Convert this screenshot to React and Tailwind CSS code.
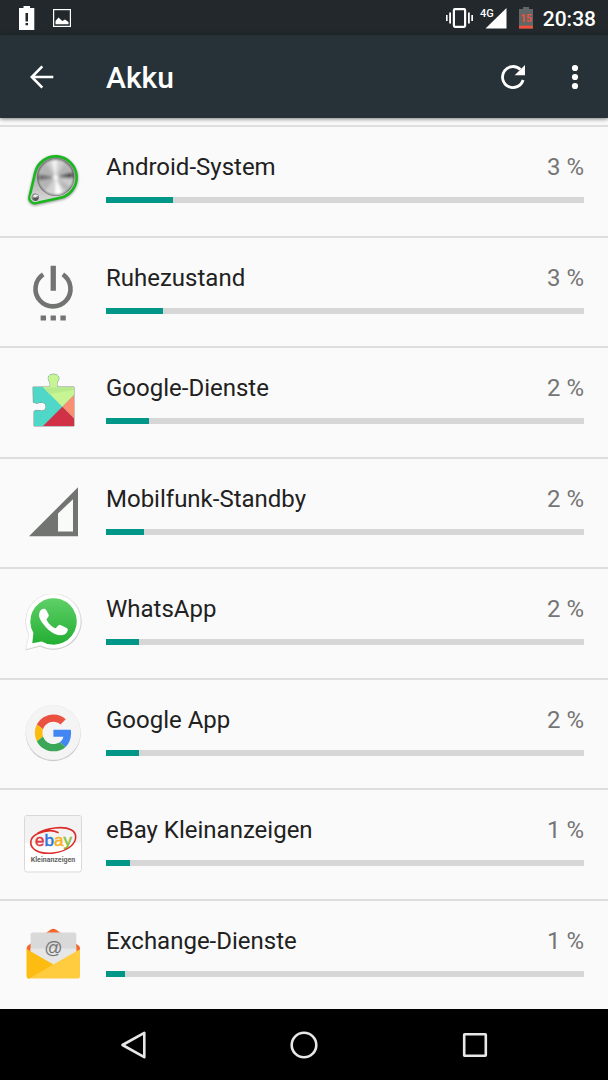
function AndroidSystemIcon() {
  return (
    <svg viewBox="0 0 58 58" className="size-full" aria-hidden="true">
      <defs>
        <radialGradient id="metalEdge" cx="0.5" cy="0.5" r="0.5">
          <stop offset="0.8" stopColor="#fff" stopOpacity="0" />
          <stop offset="1" stopColor="#555" stopOpacity="0.5" />
        </radialGradient>
        <linearGradient id="plate" x1="0" y1="0" x2="0" y2="1">
          <stop offset="0" stopColor="#8a8a8a" />
          <stop offset="1" stopColor="#dcdcdc" />
        </linearGradient>
        <clipPath id="dial">
          <circle cx="31.7" cy="25.3" r="18" />
        </clipPath>
        <filter id="soft" x="-30%" y="-30%" width="160%" height="160%">
          <feGaussianBlur stdDeviation="1.6" />
        </filter>
      </defs>
      <path d="M11.2 21.5A21 21 0 1 1 36.2 46.8L12.2 52.1A5.5 5.5 0 0 1 5.6 45.5Z" fill="#000" stroke="#000" strokeWidth="2" opacity="0.5" filter="url(#soft)" />
      <path d="M11.2 20.5A21 21 0 1 1 36.2 45.8L12.2 51.1A5.5 5.5 0 0 1 5.6 44.5Z" fill="url(#plate)" stroke="#18b81e" strokeWidth="2.6" />
      <circle cx="31.7" cy="25.3" r="18.8" fill="#7a7a7a" />
      <g clipPath="url(#dial)">
        <circle cx="31.7" cy="25.3" r="18" fill="#b4b4b4" />
        <g filter="url(#soft)">
          <path d="M31.7 25.3L16 2L46 2Z" fill="#cfcfcf" />
          <path d="M31.7 25.3L26 2L34 2Z" fill="#f4f4f4" />
          <path d="M31.7 25.3L10 22L10 29Z" fill="#6a6a6a" />
          <path d="M31.7 25.3L54 19L54 26Z" fill="#4a4a4a" />
          <path d="M31.7 25.3L14 48L48 48Z" fill="#d2d2d2" />
          <path d="M31.7 25.3L31 48L41 48Z" fill="#fff" />
          <path d="M31.7 25.3L54 28L54 40Z" fill="#cdcdcd" />
          <circle cx="31.7" cy="25.3" r="2.5" fill="#fff" />
        </g>
      </g>
      <circle cx="31.7" cy="25.3" r="18" fill="url(#metalEdge)" />
      <circle cx="11.3" cy="45.2" r="4.4" fill="#888" stroke="#ddd" />
      <path d="M8.5 44.5Q11 41 14.5 43.5L11.3 45.2Z" fill="#eee" />
      <path d="M8.5 46.5L14.5 45.5Q14 49 11 49Z" fill="#555" />
    </svg>
  );
}

function PowerIcon() {
  return (
    <svg viewBox="0 0 58 58" className="size-full" aria-hidden="true">
      <path d="M19.2 11.4A17.5 17.5 0 1 0 38.8 11.4" fill="none" stroke="#727472" strokeWidth="4.6" />
      <path d="M26.6 2.8H31.9V27.8H26.6ZM16.6 52.5H22V57.5H16.6ZM26.6 52.5H31.9V57.5H26.6ZM36.4 52.5H41.8V57.5H36.4Z" fill="#727472" />
    </svg>
  );
}

function PlayServicesIcon() {
  const piece =
    'M9 14H24.5Q26.3 14 26.3 11.5Q26 9 24.8 7.5C23.2 4 25.5 1.2 29.5 1.2C33.8 1.2 36 4 34.3 7.5Q32.8 9 32.8 11.5Q32.8 14 34.8 14H50V53H10V38.3Q12.8 36.6 16 37.8C19.8 38.4 22 36.8 22 33.8C22 30.5 19.6 29 16 29.5Q12.6 31 9.4 29.3Z';
  return (
    <svg viewBox="0 0 58 58" className="size-full" aria-hidden="true">
      <defs>
        <clipPath id="piece">
          <path d={piece} />
        </clipPath>
      </defs>
      <path d={piece} fill="#777" stroke="#8a8a8a" strokeWidth="1" />
      <g clipPath="url(#piece)">
        <path d="M0 0H58V58H0Z" fill="#4fd8c8" />
        <path d="M5 0H58V14L38.3 33.7Z" fill="#c8f593" />
        <path d="M20 15L50 13.5V17L25 21Z" fill="#b6ea8c" />
        <path d="M38.3 33.7L58 14V53.4Z" fill="#fb8f72" />
        <path d="M38.3 33.7L19 53H58V53.4Z" fill="#d03147" />
      </g>
    </svg>
  );
}

function CellStandbyIcon() {
  return (
    <svg viewBox="0 0 58 58" className="size-full" aria-hidden="true">
      <path fillRule="evenodd" d="M5 52.3L54 3.2V52.3ZM34 29.5V47.5H49V15.2Z" fill="#727472" />
    </svg>
  );
}

function WhatsAppIcon() {
  return (
    <svg viewBox="0 0 58 58" className="size-full" aria-hidden="true">
      <defs>
        <linearGradient id="waGreen" x1="0" y1="0" x2="0" y2="1">
          <stop offset="0" stopColor="#5fd067" />
          <stop offset="1" stopColor="#23ae33" />
        </linearGradient>
      </defs>
      <path d="M5 41.2A28 28 0 1 1 16.3 52.4L1.5 56.3Z" fill="#b5b5b5" opacity="0.7" />
      <path d="M5 40.2A27.5 27.5 0 1 1 16.3 51.5L1.7 55.4Z" fill="#fff" stroke="#dedede" strokeWidth="0.5" />
      <path d="M9.4 39A23.2 23.2 0 1 1 17.7 47.4L8.3 49.2Z" fill="url(#waGreen)" />
      <path d="M15.6 18.2C16.2 15.8 18.8 14.3 20.8 14.8C22 15.2 24.4 19.8 24.8 21.4C24.9 22.8 22.5 24.6 22.5 25.3C23.2 28.4 28 33.3 31.4 34.2C32.5 34.1 34 31 35.3 30.7C36.4 30.6 42.6 33.7 43.6 34.7C44.4 36.5 42.7 39.3 40.3 40.5C36.6 42.6 30 40.4 24.7 35.9C19.8 31.6 14.8 25 15 20.8Z" fill="#fff" />
    </svg>
  );
}

function GoogleIcon() {
  return (
    <svg viewBox="0 0 58 58" className="size-full" aria-hidden="true">
      <circle cx="29.2" cy="28.7" r="27.5" fill="#c4c4c4" />
      <circle cx="29.2" cy="27.6" r="27.4" fill="#f4f4f4" stroke="#e6e6e6" strokeWidth="0.5" />
      <g transform="translate(10.9 9.4) scale(0.77)">
        <path fill="#ea5140" d="M24 9.5c3.54 0 6.71 1.22 9.21 3.6l6.85-6.85C35.9 2.38 30.47 0 24 0 14.62 0 6.51 5.38 2.56 13.22l7.98 6.19C12.43 13.72 17.74 9.5 24 9.5z" />
        <path fill="#4286f3" d="M46.98 24.55c0-1.57-.15-3.09-.38-4.55H24v9.02h12.94c-.58 2.96-2.26 5.48-4.78 7.18l7.73 6c4.51-4.18 7.09-10.36 7.09-17.65z" />
        <path fill="#fbbc0d" d="M10.53 28.59c-.48-1.45-.76-2.99-.76-4.59s.27-3.14.76-4.59l-7.98-6.19C.92 16.46 0 20.12 0 24c0 3.88.92 7.54 2.56 10.78l7.97-6.19z" />
        <path fill="#3ba757" d="M24 48c6.48 0 11.93-2.13 15.89-5.81l-7.73-6c-2.15 1.45-4.92 2.3-8.16 2.3-6.26 0-11.57-4.22-13.47-9.91l-7.98 6.19C6.51 42.62 14.62 48 24 48z" />
      </g>
    </svg>
  );
}

function EbayIcon() {
  return (
    <svg viewBox="0 0 58 58" className="size-full">
      <rect x="0.5" y="0.5" width="57" height="56.5" rx="2.5" fill="#fff" stroke="#d9d9d9" />
      <path d="M1 3Q1 1 3 1H55Q57 1 57 3V28H1Z" fill="#f3f3f3" />
      <text x="11" y="31" fontSize="17" strokeWidth="0.5" fontFamily="Liberation Sans, Arial, sans-serif">
        <tspan fill="#e0393e" stroke="#e0393e">e</tspan>
        <tspan fill="#3173d8" stroke="#3173d8">b</tspan>
        <tspan fill="#f6b21b" stroke="#f6b21b">a</tspan>
        <tspan fill="#8bbf3a" stroke="#8bbf3a">y</tspan>
      </text>
      <path d="M34 17.5C29 14.8 21 15.5 14 18.5C5 22.5 4.5 31 12 35.5C21 40.5 38 38.5 46.5 31.5C53 26 53.5 18.5 47.5 15C39 10.6 23 13 14 18" fill="none" stroke="#dd2b27" strokeWidth="1.6" strokeLinecap="round" />
      <text x="29" y="47" textAnchor="middle" fontSize="7" fontWeight="700" fontFamily="Roboto, sans-serif" fill="#626262">
        Kleinanzeigen
      </text>
    </svg>
  );
}

function ExchangeIcon() {
  return (
    <svg viewBox="0 0 58 58" className="size-full">
      <path d="M2.7 24V22Q2.7 20.5 4 19.5L26.8 3.6Q29.3 1.8 31.8 3.6L54.6 19.5Q56 20.5 56 22V24L29.3 45Z" fill="#f4682f" />
      <path d="M6.6 8.6Q6.6 6.6 8.6 6.6H50.3Q52.3 6.6 52.3 8.6V42H6.6Z" fill="#d9d9d9" />
      <path d="M6.6 22.5H52.3V42H6.6Z" fill="#e6e6e6" />
      <path d="M2.7 23.2L29.3 38.5L56 23.2V50Q56 52.6 53.4 52.6H5.3Q2.7 52.6 2.7 50Z" fill="#ffcc40" />
      <path d="M2.7 23.2L29.3 38.5L5.3 52.6Q2.7 52.6 2.7 50Z" fill="#fcbc12" />
      <text x="29.3" y="28" textAnchor="middle" fontSize="18" fontFamily="Liberation Sans, Arial, sans-serif" fill="#757575">
        @
      </text>
    </svg>
  );
}

const apps = [
  { name: 'Android-System', percent: '3 %', bar: 14, Icon: AndroidSystemIcon },
  { name: 'Ruhezustand', percent: '3 %', bar: 12, Icon: PowerIcon },
  { name: 'Google-Dienste', percent: '2 %', bar: 9, Icon: PlayServicesIcon },
  { name: 'Mobilfunk-Standby', percent: '2 %', bar: 8, Icon: CellStandbyIcon },
  { name: 'WhatsApp', percent: '2 %', bar: 7, Icon: WhatsAppIcon },
  { name: 'Google App', percent: '2 %', bar: 7, Icon: GoogleIcon },
  { name: 'eBay Kleinanzeigen', percent: '1 %', bar: 5, Icon: EbayIcon },
  { name: 'Exchange-Dienste', percent: '1 %', bar: 4, Icon: ExchangeIcon },
];

function StatusBar() {
  return (
    <div className="flex h-[35px] items-center justify-between bg-[#22282b] pr-3 pl-[19px] text-white">
      <div className="flex items-center gap-[18px]">
        <svg width="16" height="24" viewBox="0 0 16 24" aria-hidden="true">
          <path fillRule="evenodd" d="M4.5 0H11V2H15.3V24H0V2H4.5ZM6.5 7V15.5H9V7ZM6.5 17V19.2H9V17Z" fill="#fff" />
        </svg>
        <svg width="18" height="18" viewBox="0 0 18 18" aria-hidden="true">
          <rect x="0.6" y="0.6" width="16.8" height="16.8" fill="none" stroke="#fff" strokeWidth="1.2" />
          <path d="M2.5 15.2V12L5.5 8.6L9.3 12L12 10.6L15.5 13V15.2Z" fill="#fff" />
        </svg>
      </div>
      <div className="flex items-center">
        <svg width="27" height="20" viewBox="0 0 27 20" aria-hidden="true">
          <rect x="7.9" y="1.2" width="11.2" height="17.6" rx="1" fill="none" stroke="#fff" strokeWidth="2.2" />
          <path d="M0 7H1.6V13H0ZM3.2 4.5H5V15.5H3.2ZM22 4.5H23.8V15.5H22ZM25.3 7H27V13H25.3Z" fill="#fff" />
        </svg>
        <svg width="27" height="22" viewBox="0 0 27 22" className="ml-[7px]">
          <text x="0" y="10" fontSize="11" fontWeight="500" fontFamily="Roboto, sans-serif" fill="#fff">
            4G
          </text>
          <path d="M5.5 21.5L26.5 1V21.5Z" fill="#fff" />
        </svg>
        <svg width="14" height="22" viewBox="0 0 14 22" className="ml-3">
          <path d="M4 0H10V2H14V21.5H0V2H4Z" fill="#616667" />
          <path d="M0 18.7H14V21.5H0Z" fill="#f4503a" />
          <text x="7" y="15" textAnchor="middle" fontSize="10" fontWeight="700" fontFamily="Roboto, sans-serif" fill="#f4503a">
            15
          </text>
        </svg>
        <span className="ml-2.5 pt-0.5 text-[21px] leading-6 font-medium">20:38</span>
      </div>
    </div>
  );
}

function AppBar() {
  return (
    <header className="relative z-10 flex h-[83px] items-center bg-[#273238] pr-[26px] pl-[30px] text-white shadow-[0_1px_4px_rgba(0,0,0,0.5)]">
      <button type="button" aria-label="Zurück" className="w-[76px]">
        <svg width="24" height="24" viewBox="0 0 24 24" aria-hidden="true">
          <path d="M23.3 12H2M12.3 1.3L1.8 12L12.3 22.7" fill="none" stroke="#fff" strokeWidth="2.6" />
        </svg>
      </button>
      <h1 className="flex-1 pt-0.5 text-[30px] leading-9 font-medium">Akku</h1>
      <button type="button" aria-label="Aktualisieren">
        <svg width="26" height="26" viewBox="0 0 26 26" aria-hidden="true">
          <path d="M20.5 5.6A10.5 10.5 0 1 0 23.1 16" fill="none" stroke="#fff" strokeWidth="2.8" />
          <path d="M25 1V11.3H14.7Z" fill="#fff" />
        </svg>
      </button>
      <button type="button" aria-label="Weitere Optionen" className="ml-[42px]">
        <svg width="14" height="26" viewBox="0 0 14 26" aria-hidden="true">
          <circle cx="7" cy="4" r="3.1" fill="#fff" />
          <circle cx="7" cy="13" r="3.1" fill="#fff" />
          <circle cx="7" cy="22" r="3.1" fill="#fff" />
        </svg>
      </button>
    </header>
  );
}

function AppRow({ name, percent, bar, Icon }) {
  return (
    <li className="flex flex-1 items-center gap-6 border-t-2 border-[#dedede] px-6">
      <div className="size-[58px] shrink-0">
        <Icon />
      </div>
      <div className="min-w-0 flex-1 pb-1.5">
        <div className="flex justify-between text-2xl leading-7">
          <span className="truncate text-[#212121]">{name}</span>
          <span className="shrink-0 text-[#757575]">{percent}</span>
        </div>
        <div className="mt-4 h-1.5 bg-[#d6d6d6]">
          <div className="h-full bg-[#009688]" style={{ width: `${bar}%` }} />
        </div>
      </div>
    </li>
  );
}

function NavBar() {
  return (
    <nav className="grid h-[71px] grid-cols-3 items-center bg-black px-12">
      <button type="button" aria-label="Zurück" className="flex justify-center">
        <svg width="28" height="28" viewBox="0 0 28 28" aria-hidden="true">
          <path d="M25.3 1.8V26.2L3.5 14Z" fill="none" stroke="#e8e8e8" strokeWidth="2.6" strokeLinejoin="round" />
        </svg>
      </button>
      <button type="button" aria-label="Startseite" className="flex justify-center">
        <svg width="28" height="28" viewBox="0 0 28 28" aria-hidden="true">
          <circle cx="14" cy="14" r="12.3" fill="none" stroke="#e8e8e8" strokeWidth="2.6" />
        </svg>
      </button>
      <button type="button" aria-label="Übersicht" className="flex justify-center">
        <svg width="28" height="28" viewBox="0 0 28 28" aria-hidden="true">
          <rect x="3.2" y="3.2" width="21.6" height="21.6" rx="0.5" fill="none" stroke="#e8e8e8" strokeWidth="2.6" />
        </svg>
      </button>
    </nav>
  );
}

export default function App() {
  return (
    <div className="flex min-h-screen flex-col bg-[#fafafa] font-[Roboto,sans-serif]">
      <StatusBar />
      <AppBar />
      <main className="flex flex-1 flex-col pt-[7px]">
        <ul className="flex flex-1 flex-col">
          {apps.map((app) => (
            <AppRow key={app.name} {...app} />
          ))}
        </ul>
      </main>
      <NavBar />
    </div>
  );
}
